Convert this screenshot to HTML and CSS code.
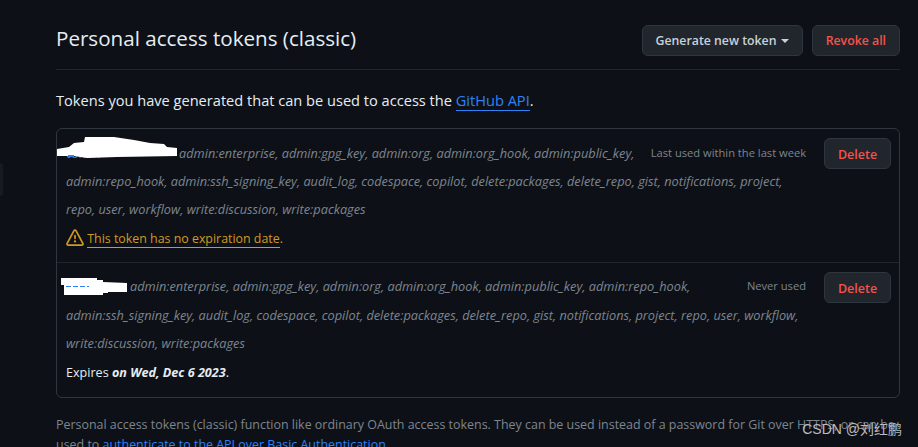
FILE: index.html
```html
<!DOCTYPE html>
<html lang="en">
<head>
  <meta charset="UTF-8">
  <meta name="viewport" content="width=device-width, initial-scale=1.0">
  <title>Personal access tokens (classic)</title>
  <link rel="stylesheet" href="styles.css">
</head>
<body>
  <div class="side-tab"></div>

  <main class="content">
    <div class="page-head">
      <h2>Personal access tokens (classic)</h2>
      <div class="head-actions">
        <button class="btn">Generate new token <span class="caret"></span></button>
        <button class="btn btn-danger">Revoke all</button>
      </div>
    </div>

    <p class="intro">Tokens you have generated that can be used to access the <a href="#" class="line-link">GitHub API</a>.</p>

    <div class="token-box">
      <div class="token-row row-one">
        <div class="token-main">
          <div class="scopes-first">
            <a href="#" class="token-name name-one">token</a>
            <em class="scopes">admin:enterprise, admin:gpg_key, admin:org, admin:org_hook, admin:public_key,</em>
            <span class="last-used">Last used within the last week</span>
          </div>
          <em class="scopes block">admin:repo_hook, admin:ssh_signing_key, audit_log, codespace, copilot, delete:packages, delete_repo, gist, notifications, project,</em>
          <em class="scopes block">repo, user, workflow, write:discussion, write:packages</em>
          <div class="token-note warn">
            <svg class="warn-icon" width="18" height="18" viewBox="0 0 16 16" fill="currentColor"><path d="M6.457 1.047c.659-1.234 2.427-1.234 3.086 0l6.082 11.378A1.75 1.75 0 0 1 14.082 15H1.918a1.75 1.75 0 0 1-1.543-2.575Zm1.763.707a.25.25 0 0 0-.44 0L1.698 13.132a.25.25 0 0 0 .22.368h12.164a.25.25 0 0 0 .22-.368Zm.53 3.996v2.5a.75.75 0 0 1-1.5 0v-2.5a.75.75 0 0 1 1.5 0ZM9 11a1 1 0 1 1-2 0 1 1 0 0 1 2 0Z"/></svg>
            <a href="#" class="warn-link">This token has no expiration date</a>.
          </div>
        </div>
        <button class="btn btn-danger btn-delete">Delete</button>
        <svg class="blot blot-one" width="120" height="21" viewBox="0 0 120 21"><polygon fill="#fff" points="0,12 12,10 17,6 27,5 28,0 57,0 77,3 93,6 107,7 110,10 120,11 120,19 60,20 30,21 17,19 12,19 0,19"/><line x1="11" y1="19" x2="17" y2="19" stroke="#2f81f7" stroke-width="2"/></svg>
      </div>

      <div class="token-row row-two">
        <div class="token-main">
          <div class="scopes-first">
            <a href="#" class="token-name name-two">token</a>
            <em class="scopes">admin:enterprise, admin:gpg_key, admin:org, admin:org_hook, admin:public_key, admin:repo_hook,</em>
            <span class="last-used">Never used</span>
          </div>
          <em class="scopes block">admin:ssh_signing_key, audit_log, codespace, copilot, delete:packages, delete_repo, gist, notifications, project, repo, user, workflow,</em>
          <em class="scopes block">write:discussion, write:packages</em>
          <div class="token-note">Expires <strong><em>on Wed, Dec 6 2023</em></strong>.</div>
        </div>
        <button class="btn btn-danger btn-delete">Delete</button>
        <svg class="blot blot-two" width="66" height="17" viewBox="0 0 66 17"><polygon fill="#fff" points="0,0 36,0 36,2 42,2 42,4 66,5 66,14 47,14 47,15 42,15 42,17 3,17 3,7 0,7"/><line x1="5" y1="8.5" x2="28" y2="8.5" stroke="#2f81f7" stroke-dasharray="5 2"/></svg>
      </div>
    </div>

    <p class="foot-note">Personal access tokens (classic) function like ordinary OAuth access tokens. They can be used instead of a password for Git over HTTPS, or can be used to <a href="#">authenticate to the API over Basic Authentication</a>.</p>
  </main>

  <div class="watermark">CSDN @刘红鹏</div>
</body>
</html>
```

FILE: styles.css
```css
html, body { height: 100%; }
body { margin: 0; background: #0d1117; color: #e6edf3; font-family: "Open Sans", "Noto Sans", sans-serif; font-size: 13px; overflow: hidden; position: relative; }
a { color: #2f81f7; text-decoration: none; }
em { font-style: italic; }

.side-tab { position: absolute; left: 0; top: 163px; width: 3px; height: 33px; background: #161b22; border-radius: 0 4px 4px 0; }

.content { margin: 0 18px 0 56px; padding-top: 25px; }

.page-head { display: flex; justify-content: space-between; align-items: flex-start; height: 44px; border-bottom: 1px solid #21262d; }
.page-head h2 { margin: 0; font-size: 20.6px; font-weight: 400; line-height: 27px; }
.head-actions { display: flex; gap: 9px; }

.btn { height: 31px; padding: 0 13px; background: #21262d; color: #c9d1d9; border: 1px solid #30363d; border-radius: 6px; font-family: inherit; font-size: 12.3px; font-weight: 600; }
.btn-danger { color: #f85149; }
.btn-delete { flex: none; width: 67px; padding: 1px 0 0; margin-top: 9px; font-size: 12.5px; }
.caret { display: inline-block; margin-left: 1px; vertical-align: 2px; border: 4px solid transparent; border-top-color: currentColor; border-bottom-width: 0; }

.intro { margin: 20px 0 17px; line-height: 21px; font-size: 14.6px; }
.line-link { border-bottom: 1px solid #2f81f7; }

.token-box { border: 1px solid #30363d; border-radius: 6px; }
.token-row { display: flex; justify-content: space-between; padding: 0 8px 0 9px; position: relative; }
.token-row + .token-row { border-top: 1px solid #21262d; }
.token-main { flex: none; width: 740px; }
.row-one .token-main { padding: 10px 0 9px; }
.row-two .token-main { padding: 9px 0 9px; }
.row-two .scopes-first { margin-bottom: 1px; }
.scopes-first { display: flex; line-height: 28px; height: 28px; }
.token-name { margin-right: 4px; }
.name-one { width: 109px; }
.name-two { width: 60px; }
.scopes { color: #7d8590; font-size: 12.75px; line-height: 28px; white-space: nowrap; }
.block { display: block; }
.last-used { margin-left: auto; color: #7d8590; font-size: 11.15px; white-space: nowrap; }

.token-note { height: 31px; line-height: 31px; font-size: 12.6px; white-space: nowrap; }
.warn { color: #d29922; margin-top: 1px; height: 29px; line-height: 29px; font-size: 12.4px; }
.warn-icon { vertical-align: -4px; }
.warn-link { color: #d29922; border-bottom: 1px solid #d29922; }

/* redaction scribbles from the original capture */
.blot { position: absolute; }
.blot-one { left: 0; top: 8px; }
.blot-two { left: 4px; top: 15px; }

.foot-note { margin: 17px 0 0; color: #7d8590; font-size: 12.45px; line-height: 20px; }

.watermark { position: absolute; right: 16px; top: 418px; color: #b9bcc0; font-size: 14px; font-family: "Liberation Sans", "Noto Sans CJK SC", sans-serif; }
```
